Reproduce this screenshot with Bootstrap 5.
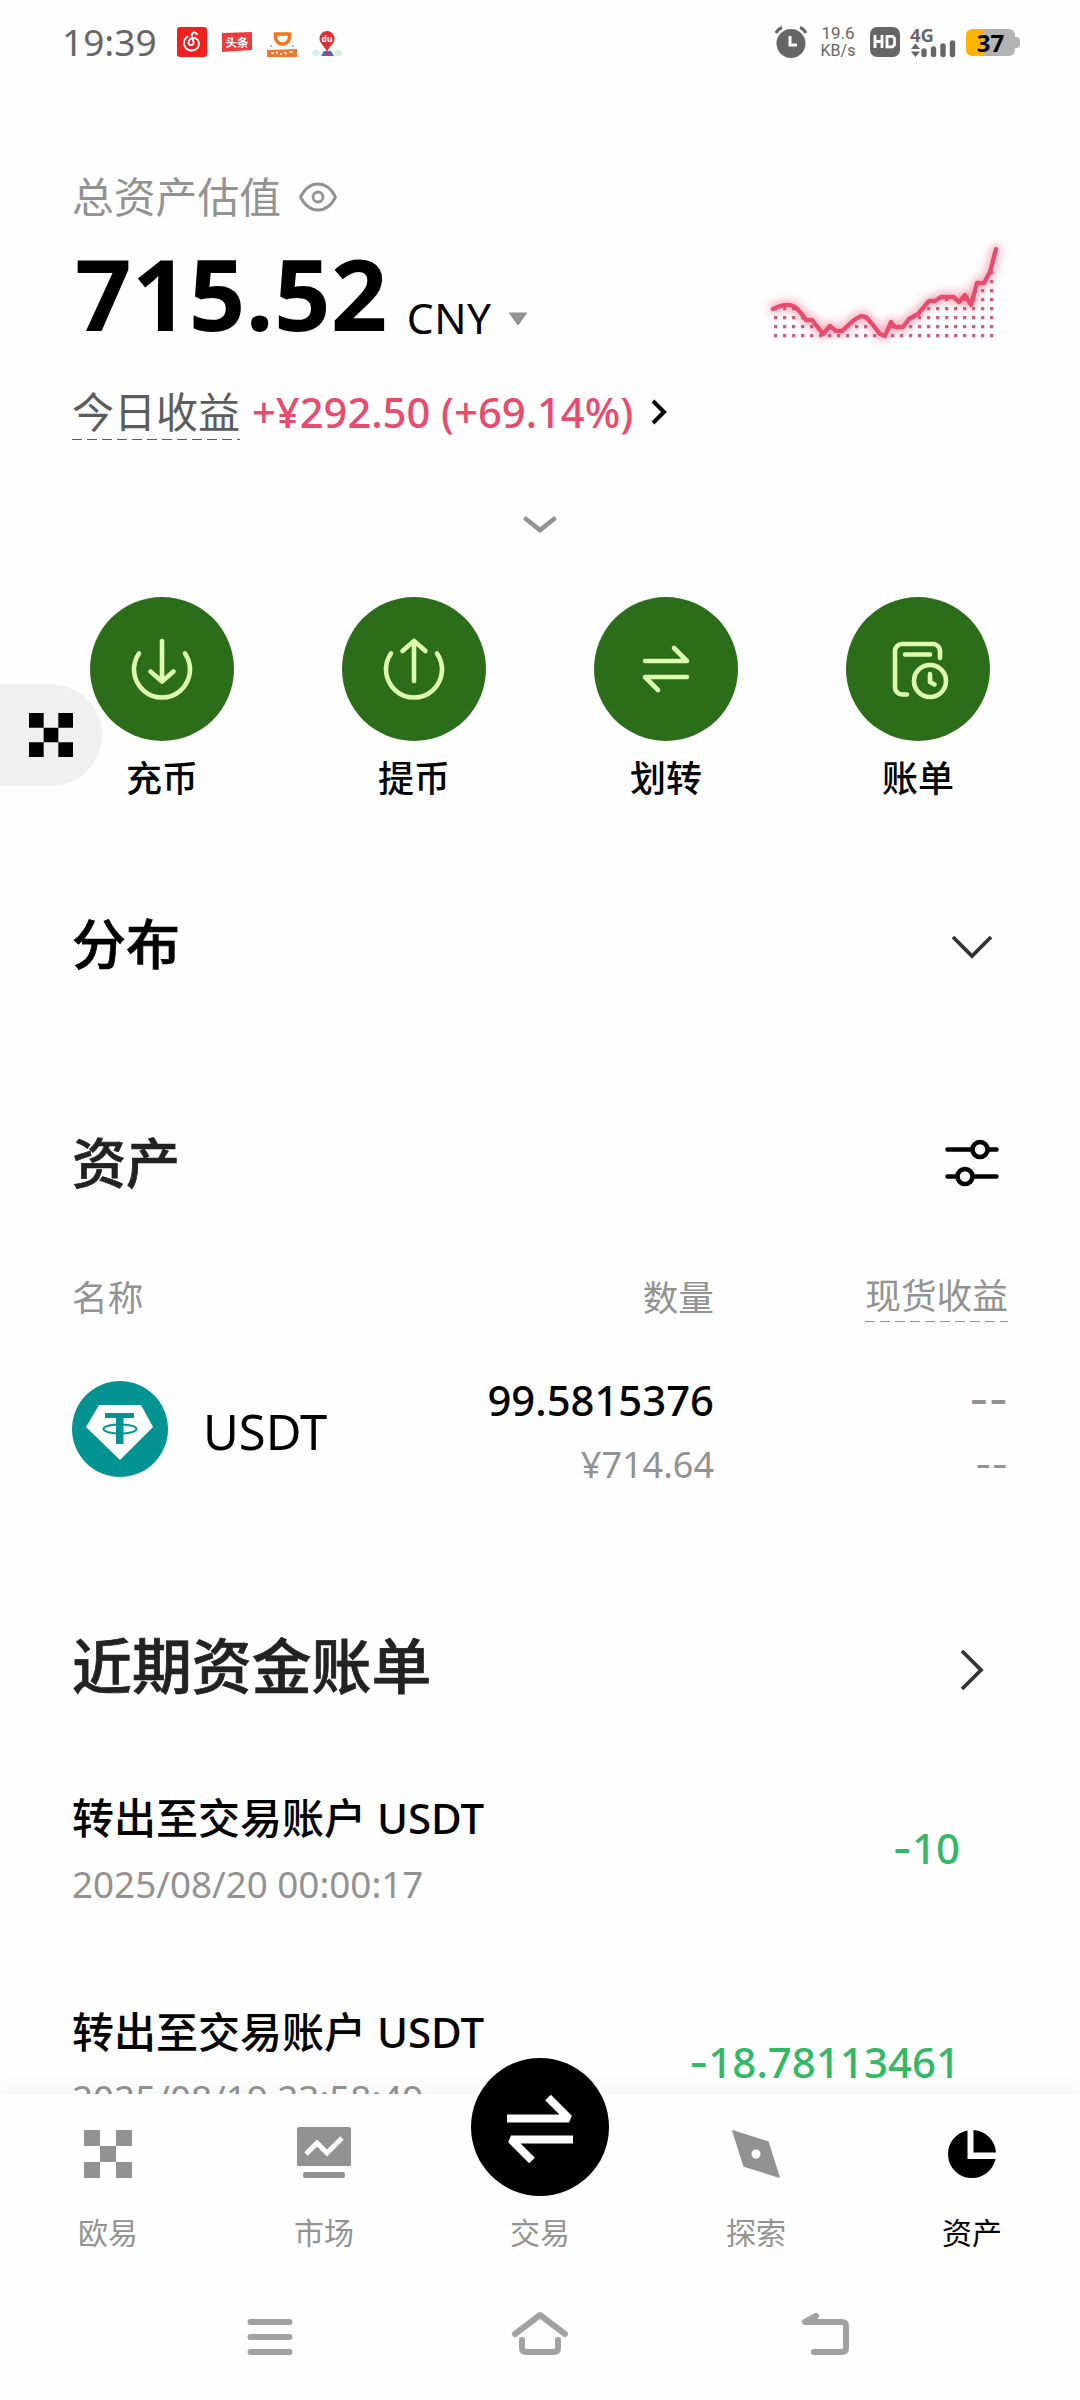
<!DOCTYPE html>
<html lang="zh-CN">
<head>
<meta charset="utf-8">
<meta name="viewport" content="width=device-width, initial-scale=1">
<title>资产</title>
<link rel="stylesheet" href="https://cdn.jsdelivr.net/npm/bootstrap@5.3.0/dist/css/bootstrap.min.css">
<style>
  body { font-family: "Noto Sans", "Noto Sans CJK SC", sans-serif; background: #fefefe; color: #000; width: 1080px; height: 2400px; }
  svg { display: block; flex: none; }
  .screen { width: 1080px; height: 2400px; overflow: hidden; }
  .statusbar { height: 84px; padding: 0 60px 0 62px; color: #666; }
  .clock { font-size: 37px; line-height: 50px; width: 115px; }
  .speed { font: 17px/18px Roboto, sans-serif; width: 40px; }
  .speed-unit { font-size: 16px; line-height: 18px; }
  .battery { width: 49px; height: 27px; border-radius: 6px; background: linear-gradient(90deg, #fdb400 36%, #b3b3b3 36%); color: #000; font: 700 24px/27px "Noto Sans", sans-serif; }
  .battery-tip { width: 5px; height: 11px; border-radius: 0 4px 4px 0; background: #b3b3b3; }
  .page { padding: 0 72px; }
  .muted { color: #929292; }
  .label-total { height: 60px; margin-top: 83px; font-size: 41.8px; line-height: 60px; }
  .balance-row { height: 120px; margin-top: 8px; }
  .balance { font-size: 99px; font-weight: 700; line-height: 116px; margin-left: 3px; letter-spacing: .3px; }
  .currency { font-size: 42.5px; line-height: 60px; margin: 53px 0 0 19px; letter-spacing: .5px; }
  .caret { margin: 77px 0 0 17px; }
  .trend { margin: 5px -10px 0 0; }
  .gain-row { height: 56px; margin-top: 29px; font-size: 42px; line-height: 56px; }
  .gain-label { color: #5c5c5c; height: 56px; }
  .dashed { background: repeating-linear-gradient(90deg, currentColor 0 10px, transparent 10px 15px) left bottom / 100% 1.5px no-repeat; }
  .gain { color: #e94b6e; font-weight: 500; font-size: 41.7px; margin-left: 12px; white-space: nowrap; }
  .expander { height: 30px; margin-top: 70px; }
  .actions { margin-top: 57px; padding: 0 18px; }
  .action { width: 144px; }
  .action-disc { width: 144px; height: 144px; background: #2b6d19; }
  .action-text { font-size: 36px; font-weight: 500; line-height: 50px; margin-top: 13px; }
  .float-handle { left: 0; top: 684px; width: 102px; height: 102px; border-radius: 0 51px 51px 0; background: #f0f0f0; padding-left: 29px; }
  .heading { font-size: 54px; font-weight: 500; line-height: 80px; height: 80px; -webkit-text-stroke: .7px currentColor; }
  .dark { color: #222; }
  .dist { margin-top: 100px; }
  .assets { margin-top: 139px; }
  .thead-row { font-size: 35.7px; line-height: 46px; margin-top: 71px; height: 50px; }
  .c-pnl { width: 294px; }
  .coin-row { margin-top: 49px; height: 110px; }
  .coin-name { font-size: 49px; line-height: 60px; width: 190px; margin-left: 35px; margin-top: 28px; }
  .coin-qty { font-size: 41.8px; line-height: 60px; font-weight: 500; margin-top: -3px; }
  .coin-val { font-size: 36px; line-height: 60px; margin-top: 5px; }
  .dash { font-family: Inter, sans-serif; }
  .bills { margin-top: 138px; font-size: 59.9px; line-height: 90px; height: 90px; }
  .bill { height: 213.5px; padding-right: 48px; }
  .bill-list { margin-top: 77px; }
  .bill-title { font-size: 42px; font-weight: 500; line-height: 60px; }
  .bill-date { font-size: 36.8px; line-height: 50px; margin-top: 11px; }
  .bill-amt { font-size: 42px; font-weight: 500; line-height: 60px; color: #32b966; margin-top: 30px; }
  .tabbar { left: 0; top: 2094px; width: 1080px; height: 306px; background: #fefefe; box-shadow: 0 -4px 18px rgba(0,0,0,.045); }
  .tab { width: 216px; height: 180px; }
  .tab-icon { height: 54px; margin-top: 33px; }
  .tab-text { font-size: 30px; line-height: 40px; margin-top: 32px; }
  .trade-disc { width: 138px; height: 138px; background: #000; margin-top: -36px; }
  .trade-disc + .tab-text { margin-top: 17px; }
  .sysnav { height: 100px; padding: 27px 0 0 243px; }
</style>
<script src="https://cdn.jsdelivr.net/npm/bootstrap@5.3.0/dist/js/bootstrap.bundle.min.js"></script>
</head>
<body>
<div class="screen position-relative">
  <header class="statusbar d-flex align-items-center justify-content-between">
    <div class="d-flex align-items-center">
      <div class="clock">19:39</div>
      <div class="d-flex" style="gap:15px">
        <svg width="30" height="30" viewBox="0 0 30 30"><rect width="30" height="30" rx="3" fill="#f0201e"/><path d="M20 7c-3-3-6-1-5 3l1.500 5c.5 4-5 4-5 .5 0-3 3-5 6-4.500 6 1 6.500 12-2.500 12.500-8 0-11-9-4.500-14" fill="none" stroke="#fff" stroke-width="1.900" stroke-linecap="round"/></svg>
        <svg width="30" height="30" viewBox="0 0 30 30"><path d="M0 6l30-1v18L0 25z" fill="#ee3b3e"/><text x="15" y="19.500" text-anchor="middle" font-size="11.500" font-weight="700" fill="#fff" font-family="Noto Sans CJK SC">头条</text></svg>
        <svg width="30" height="30" viewBox="0 0 30 30"><path d="M8.500 7h14v3a7 7 0 0 1-14 0z" fill="#fff" stroke="#f3731d" stroke-width="3.500"/><path d="M0 23l30-1v8H0z" fill="#f0752d"/><path d="M4 26h3m2 0l2-1m2 2h2m2-2l3 2m2-2h4" stroke="#fff" stroke-width="1.500"/><path d="M3 19h2m20 0h2" stroke="#aab9de" stroke-width="2"/></svg>
        <svg width="30" height="30" viewBox="0 0 30 30"><ellipse cx="4" cy="26" rx="4" ry="3" fill="#dcecf3"/><ellipse cx="26" cy="26" rx="4" ry="3" fill="#dcedd5"/><path d="M9 29l3-5h7l3 5z" fill="#2d74d2"/><path d="M12 29l3-5 3 5z" fill="#e62e3b"/><path d="M15 25C13 19 7.500 17 7.500 11.500a7.500 7.500 0 0 1 15 0C22.500 17 17 19 15 25z" fill="#e22b35"/><text x="15" y="14.500" text-anchor="middle" font-size="8.500" font-weight="700" fill="#fff" font-family="Noto Sans">du</text></svg>
      </div>
    </div>
    <div class="d-flex align-items-center">
      <svg width="34" height="32" viewBox="0 0 34 32"><circle cx="17" cy="17.500" r="14.500" fill="#666"/><path d="M2 7Q4 3 8 1.500M32 7Q30 3 26 1.500" stroke="#666" stroke-width="3" fill="none"/><path d="M16 10v9h7" stroke="#fff" stroke-width="3" fill="none"/></svg>
      <div class="speed text-center" style="margin:0 12px 0 10px"><div>19.6</div><div class="speed-unit">KB/s</div></div>
      <svg width="30" height="30" viewBox="0 0 30 30"><rect width="30" height="30" rx="7" fill="#666"/><path d="M5 8v13M12 8v13M5 14.500h7M17 9.300h5.500l2 2v6.500l-2 2H17z" fill="none" stroke="#fff" stroke-width="2.800"/></svg>
      <svg style="margin:0 10px" width="46" height="34" viewBox="0 0 46 34"><text x="0" y="16.500" font-size="18.500" font-weight="700" fill="#666" font-family="Noto Sans">4G</text><path d="M1 24l4.500-5.500L10 24zM1 26.500l4.500 5.500 4.500-5.500z" fill="#666"/><path d="M14 26v3.500M23.500 24v5.500M33 21v8.500M42.500 18v11.500" stroke="#666" stroke-width="5.400" stroke-linecap="round"/></svg>
      <div class="battery text-center">37</div><div class="battery-tip"></div>
    </div>
  </header>

  <main class="page">
    <div class="label-total muted d-flex align-items-center">
      <span>总资产估值</span>
      <svg style="margin-left:18px" width="38" height="30" viewBox="0 0 38 30" fill="none" stroke="#929292" stroke-width="2.800"><path d="M1.500 15Q8 2 19 2t17.500 13Q30 28 19 28T1.500 15z" stroke-linejoin="round"/><circle cx="19" cy="15" r="5"/></svg>
    </div>
    <div class="balance-row d-flex">
      <div class="balance">715.52</div>
      <div class="currency">CNY</div>
      <svg class="caret" width="20" height="14" viewBox="0 0 20 14"><path d="M.5.500h19L11 12.500q-1 1-2 0z" fill="#929292"/></svg>
      <svg class="trend ms-auto" width="270" height="115" viewBox="0 0 270 115">
        <defs>
          <filter id="glow" x="-20%" y="-30%" width="140%" height="160%"><feGaussianBlur stdDeviation="5"/></filter>
          <pattern id="dots" x="26" y="4" width="9" height="9" patternUnits="userSpaceOnUse"><rect x="0" y="0" width="3.300" height="3.300" fill="#c95e80"/></pattern>
        </defs>
        <path d="M25 69C33 65 40 64 45 66C51 69 53 73 58 80H64L75 94 82 86 88 91H94L106 80 113 76 118 77 125 85 132 94 137 96 143 82 147 87H155L161 79 170 74 181 61H187L193 57H206L211 62 217 55 223 65 229 43H236L242 32 248 22V98H25z" fill="url(#dots)"/>
        <g fill="none" stroke="#e94b6e" stroke-linecap="round" stroke-linejoin="round">
          <path filter="url(#glow)" opacity=".55" stroke-width="8" d="M25 69C33 65 40 64 45 66C51 69 53 73 58 80H64L75 94 82 86 88 91H94L106 80 113 76 118 77 125 85 132 94 137 96 143 82 147 87H155L161 79 170 74 181 61H187L193 57H206L211 62 217 55 223 65 229 43H236L242 32 248 9"/>
          <path stroke-width="4.300" d="M25 69C33 65 40 64 45 66C51 69 53 73 58 80H64L75 94 82 86 88 91H94L106 80 113 76 118 77 125 85 132 94 137 96 143 82 147 87H155L161 79 170 74 181 61H187L193 57H206L211 62 217 55 223 65 229 43H236L242 32 248 9"/>
        </g>
      </svg>
    </div>
    <div class="gain-row d-flex align-items-center">
      <span class="gain-label dashed">今日收益</span>
      <span class="gain">+¥292.50 (+69.14%)</span>
      <svg style="margin-left:17px" width="18" height="28" viewBox="0 0 18 28"><path d="M3 3l11 11L3 25" fill="none" stroke="#000" stroke-width="4"/></svg>
    </div>
    <div class="expander d-flex justify-content-center align-items-center">
      <svg width="34" height="18" viewBox="0 0 34 18"><path d="M3 3l14 11L31 3" fill="none" stroke="#929292" stroke-width="4.600" stroke-linecap="round"/></svg>
    </div>
    <div class="actions d-flex justify-content-between">
      <div class="action text-center"><div class="action-disc rounded-circle d-flex align-items-center justify-content-center"><svg width="72" height="72" viewBox="0 0 72 72" fill="none" stroke="#deffad" stroke-width="4.600" stroke-linecap="round" stroke-linejoin="round"><path d="M13 20.500A28 28 0 1 0 59 20.500"/><path d="M36 8v40M24.500 38.500L36 48.500l11.500-10"/></svg></div><div class="action-text">充币</div></div>
      <div class="action text-center"><div class="action-disc rounded-circle d-flex align-items-center justify-content-center"><svg width="72" height="72" viewBox="0 0 72 72" fill="none" stroke="#deffad" stroke-width="4.600" stroke-linecap="round" stroke-linejoin="round"><path d="M13 20.500A28 28 0 1 0 59 20.500"/><path d="M36 48V8M24.500 18L36 8l11.500 10"/></svg></div><div class="action-text">提币</div></div>
      <div class="action text-center"><div class="action-disc rounded-circle d-flex align-items-center justify-content-center"><svg width="72" height="72" viewBox="0 0 72 72" fill="none" stroke="#deffad" stroke-width="4.600" stroke-linecap="round" stroke-linejoin="round"><path d="M15 28h42L44 15M57 44H15l13 13"/></svg></div><div class="action-text">划转</div></div>
      <div class="action text-center"><div class="action-disc rounded-circle d-flex align-items-center justify-content-center"><svg width="72" height="72" viewBox="0 0 72 72" fill="none" stroke="#deffad" stroke-width="4.600" stroke-linecap="round" stroke-linejoin="round"><path d="M25 61.500h-5a7 7 0 0 1-7-7V18a7 7 0 0 1 7-7h31a7 7 0 0 1 7 7v7M23 21.500h25"/><circle cx="48" cy="48" r="16"/><path d="M48 41v8l4.500 2.500"/></svg></div><div class="action-text">账单</div></div>
    </div>

    <div class="dist heading d-flex align-items-center justify-content-between">
      <span>分布</span>
      <svg style="margin:4px 14px 0 0" width="44" height="28" viewBox="0 0 44 28"><path d="M3 5l19 19L41 5" fill="none" stroke="#333" stroke-width="3.800"/></svg>
    </div>
    <div class="assets heading dark d-flex align-items-center justify-content-between">
      <span>资产</span>
      <svg style="margin-right:8px" width="56" height="52" viewBox="0 0 56 52" fill="#fefefe" stroke="#000" stroke-width="4.600" stroke-linecap="round"><path d="M3.500 12.500h49M3.500 39.500h49"/><circle cx="36" cy="12.500" r="7.500"/><circle cx="21" cy="39.500" r="7.500"/></svg>
    </div>
    <div class="thead-row muted d-flex justify-content-between">
      <span>名称</span>
      <div class="d-flex">
        <span>数量</span>
        <span class="c-pnl d-flex justify-content-end"><span class="dashed" style="height:48px;line-height:42px">现货收益</span></span>
      </div>
    </div>
    <div class="coin-row d-flex">
      <svg width="96" height="96" viewBox="0 0 96 96" style="margin-top:8px"><circle cx="48" cy="48" r="48" fill="#039393"/><path d="M27 24h42l12 22-33 33-34-33z" fill="#fff"/><path d="M33 32h29v5h-10.500v26h-7.500V37H33z" fill="#039393"/><ellipse cx="48" cy="48" rx="16.500" ry="4.500" fill="none" stroke="#039393" stroke-width="2"/></svg>
      <div class="coin-name">USDT</div>
      <div class="flex-grow-1 text-end">
        <div class="coin-qty">99.5815376</div>
        <div class="coin-val muted">¥714.64</div>
      </div>
      <div class="c-pnl text-end muted">
        <div class="coin-qty dash">--</div>
        <div class="coin-val dash">--</div>
      </div>
    </div>
    <div class="bills heading dark d-flex align-items-center justify-content-between">
      <span>近期资金账单</span>
      <svg style="margin:8px 22px 0 0" width="28" height="44" viewBox="0 0 28 44"><path d="M4 3l19 19L4 41" fill="none" stroke="#333" stroke-width="3.800"/></svg>
    </div>
    <div class="bill-list">
      <div class="bill d-flex justify-content-between">
        <div><div class="bill-title">转出至交易账户 USDT</div><div class="bill-date muted">2025/08/20 00:00:17</div></div>
        <div class="bill-amt"><span class="dash">-</span>10</div>
      </div>
      <div class="bill d-flex justify-content-between">
        <div><div class="bill-title">转出至交易账户 USDT</div><div class="bill-date muted">2025/08/19 23:58:49</div></div>
        <div class="bill-amt"><span class="dash">-</span>18.78113461</div>
      </div>
    </div>
  </main>

  <div class="float-handle position-absolute d-flex align-items-center">
    <svg width="44" height="44" viewBox="0 0 3 3"><path d="M0 0h1v1H0zM2 0h1v1H2zM1 1h1v1H1zM0 2h1v1H0zM2 2h1v1H2z"/></svg>
  </div>

  <nav class="tabbar position-absolute">
    <div class="d-flex muted">
      <div class="tab d-flex flex-column align-items-center"><div class="tab-icon"><svg style="margin-top:3px" width="48" height="48" viewBox="0 0 3 3" fill="#929292"><path d="M0 0h1v1H0zM2 0h1v1H2zM1 1h1v1H1zM0 2h1v1H0zM2 2h1v1H2z"/></svg></div><div class="tab-text">欧易</div></div>
      <div class="tab d-flex flex-column align-items-center"><div class="tab-icon"><svg width="54" height="54" viewBox="0 0 54 54" fill="#929292"><rect width="54" height="39" rx="1.500"/><rect x="6" y="45" width="42" height="6" rx="2"/><path d="M9 27l11-11 10 10 15-15" fill="none" stroke="#fff" stroke-width="5"/></svg></div><div class="tab-text">市场</div></div>
      <div class="tab d-flex flex-column align-items-center"><div class="trade-disc rounded-circle d-flex align-items-center justify-content-center"><svg width="72" height="72" viewBox="0 0 72 72" fill="none" stroke="#fff" stroke-width="8" stroke-linejoin="round"><path d="M3 27.500h62L44 6.500M69 48.500H7l21 21" stroke-linejoin="bevel"/></svg></div><div class="tab-text">交易</div></div>
      <div class="tab d-flex flex-column align-items-center"><div class="tab-icon"><svg style="margin-top:3px" width="48" height="48" viewBox="0 0 48 48"><path d="M1 1l35 11 11 35-35-11z" fill="#929292" stroke="#929292" stroke-width="1.500" stroke-linejoin="round"/><circle cx="24" cy="24" r="4.500" fill="#fff"/></svg></div><div class="tab-text">探索</div></div>
      <div class="tab d-flex flex-column align-items-center"><div class="tab-icon"><svg style="margin-top:3px" width="48" height="48" viewBox="0 0 48 48"><path d="M19.500.5A24 24 0 1 0 47.500 29h-28zM25.500 0v22.500H48A24 24 0 0 0 25.500 0z"/></svg></div><div class="tab-text text-black">资产</div></div>
    </div>
    <div class="sysnav d-flex">
      <svg width="54" height="54" viewBox="0 0 54 54" stroke="#a1a1a1" stroke-width="6" stroke-linecap="round"><path d="M7.500 21h39M7.500 36h39M7.500 51h39"/></svg>
      <svg style="margin-left:213px" width="60" height="58" viewBox="0 0 60 58" fill="none" stroke="#a1a1a1" stroke-width="6" stroke-linecap="round" stroke-linejoin="round"><path d="M5 33L30 14l25 19M12 39v8q0 4 4 4h28q4 0 4-4v-8"/></svg>
      <svg style="margin-left:229px" width="56" height="58" viewBox="0 0 56 58" fill="none" stroke="#a1a1a1" stroke-width="6" stroke-linecap="round" stroke-linejoin="round"><path d="M17 15L6 21h37q4 0 4 4v22q0 4-4 4H15"/></svg>
    </div>
  </nav>
</div>
</body>
</html>
